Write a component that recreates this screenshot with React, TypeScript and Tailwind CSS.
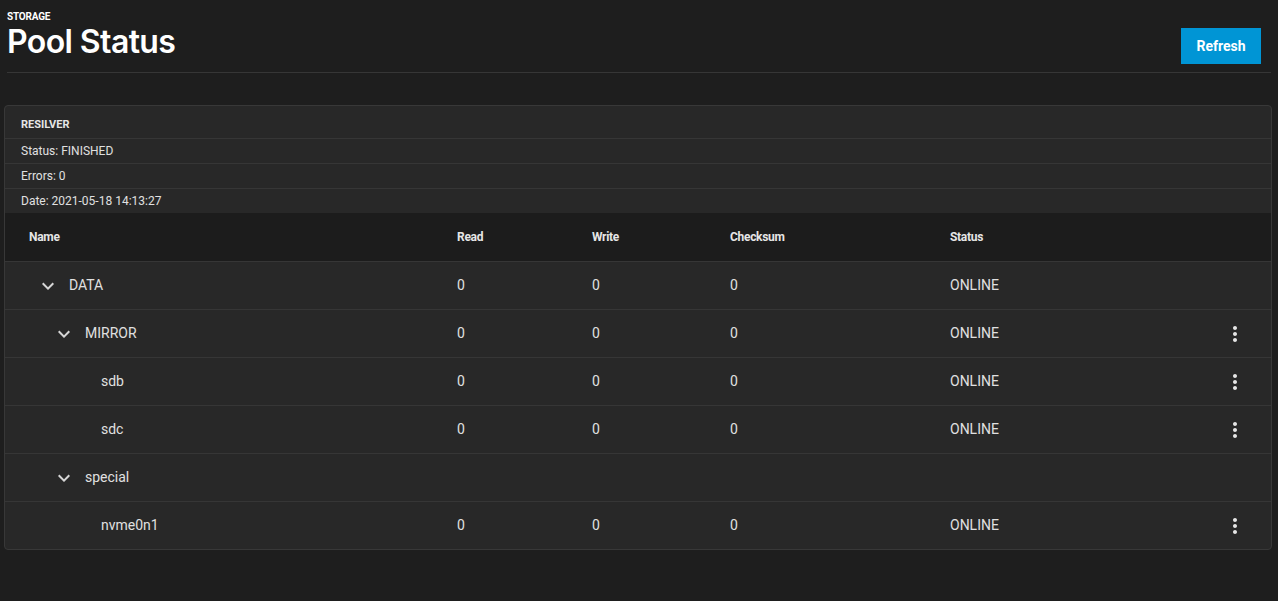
import React from 'react';

type Node = {
  name: string;
  depth: number;
  group?: boolean;
  stats?: boolean;
  menu?: boolean;
};

const rows: Node[] = [
  { name: 'DATA', depth: 0, group: true, stats: true },
  { name: 'MIRROR', depth: 1, group: true, stats: true, menu: true },
  { name: 'sdb', depth: 2, stats: true, menu: true },
  { name: 'sdc', depth: 2, stats: true, menu: true },
  { name: 'special', depth: 1, group: true },
  { name: 'nvme0n1', depth: 2, stats: true, menu: true },
];

const indent = ['pl-[7px]', 'pl-[23px]', 'pl-[39px]'];

function Chevron() {
  return (
    <svg width="24" height="24" viewBox="0 0 24 24" className="shrink-0">
      <path d="M16.59 8.59L12 13.17 7.41 8.59 6 10l6 6 6-6z" fill="#d6d6d6" />
    </svg>
  );
}

function Kebab() {
  return (
    <svg width="24" height="24" viewBox="0 0 24 24">
      <path
        d="M12 8c1.1 0 2-.9 2-2s-.9-2-2-2-2 .9-2 2 .9 2 2 2zm0 2c-1.1 0-2 .9-2 2s.9 2 2 2 2-.9 2-2-.9-2-2-2zm0 6c-1.1 0-2 .9-2 2s.9 2 2 2 2-.9 2-2-.9-2-2-2z"
        fill="#e6e6e6"
      />
    </svg>
  );
}

const grid = 'grid grid-cols-[428px_135px_138px_220px_1fr_24px] items-center px-6';

export default function App() {
  return (
    <div className="min-h-screen bg-[#1e1e1e] text-[#e0e0e0] font-['Roboto',sans-serif]">
      {/* Page header */}
      <div className="px-[7px] pt-[11px]">
        <div className="flex items-start justify-between border-b border-[#363636] pb-[8px]">
          <div>
            <div className="text-[10px] font-bold leading-[12px] text-white tracking-[-0.2px]">STORAGE</div>
            <h1 className="mt-[1px] font-['Inter',sans-serif] text-[32px] font-semibold leading-[36px] tracking-[-0.6px] text-white">
              Pool Status
            </h1>
          </div>
          <button className="mt-[17px] mr-[10px] h-[36px] w-[80px] bg-[#0095d5] text-[14px] font-bold text-white">
            Refresh
          </button>
        </div>
      </div>

      {/* Pool card */}
      <div className="ml-[4px] mr-[6px] mt-[32px] overflow-hidden rounded-[4px] border border-[#383838] bg-[#282828]">
        <div className="flex h-[32px] items-end px-4 pb-[5px] text-[11px] font-bold text-[#e6e6e6]">RESILVER</div>
        {['Status: FINISHED', 'Errors: 0', 'Date: 2021-05-18 14:13:27'].map((t) => (
          <div key={t} className="flex h-[25px] items-center border-t border-[#363636] px-4 text-[12px] text-[#e0e0e0]">
            {t}
          </div>
        ))}

        <div className={`${grid} h-[48px] bg-[#1c1c1c] text-[12px] font-bold text-[#e6e6e6] tracking-[-0.3px]`}>
          <div>Name</div>
          <div>Read</div>
          <div>Write</div>
          <div>Checksum</div>
          <div>Status</div>
          <div />
        </div>

        {rows.map((r) => (
          <div key={r.name} className={`${grid} h-[48px] border-t border-[#363636] text-[14px] text-[#e0e0e0]`}>
            <div className={`flex items-center ${indent[r.depth]}`}>
              {r.group ? <Chevron /> : <span className="w-[24px] shrink-0" />}
              <span className="ml-[9px]">{r.name}</span>
            </div>
            <div>{r.stats ? '0' : ''}</div>
            <div>{r.stats ? '0' : ''}</div>
            <div>{r.stats ? '0' : ''}</div>
            <div>{r.stats ? 'ONLINE' : ''}</div>
            <div className="flex justify-center">{r.menu ? <Kebab /> : null}</div>
          </div>
        ))}
      </div>
    </div>
  );
}
